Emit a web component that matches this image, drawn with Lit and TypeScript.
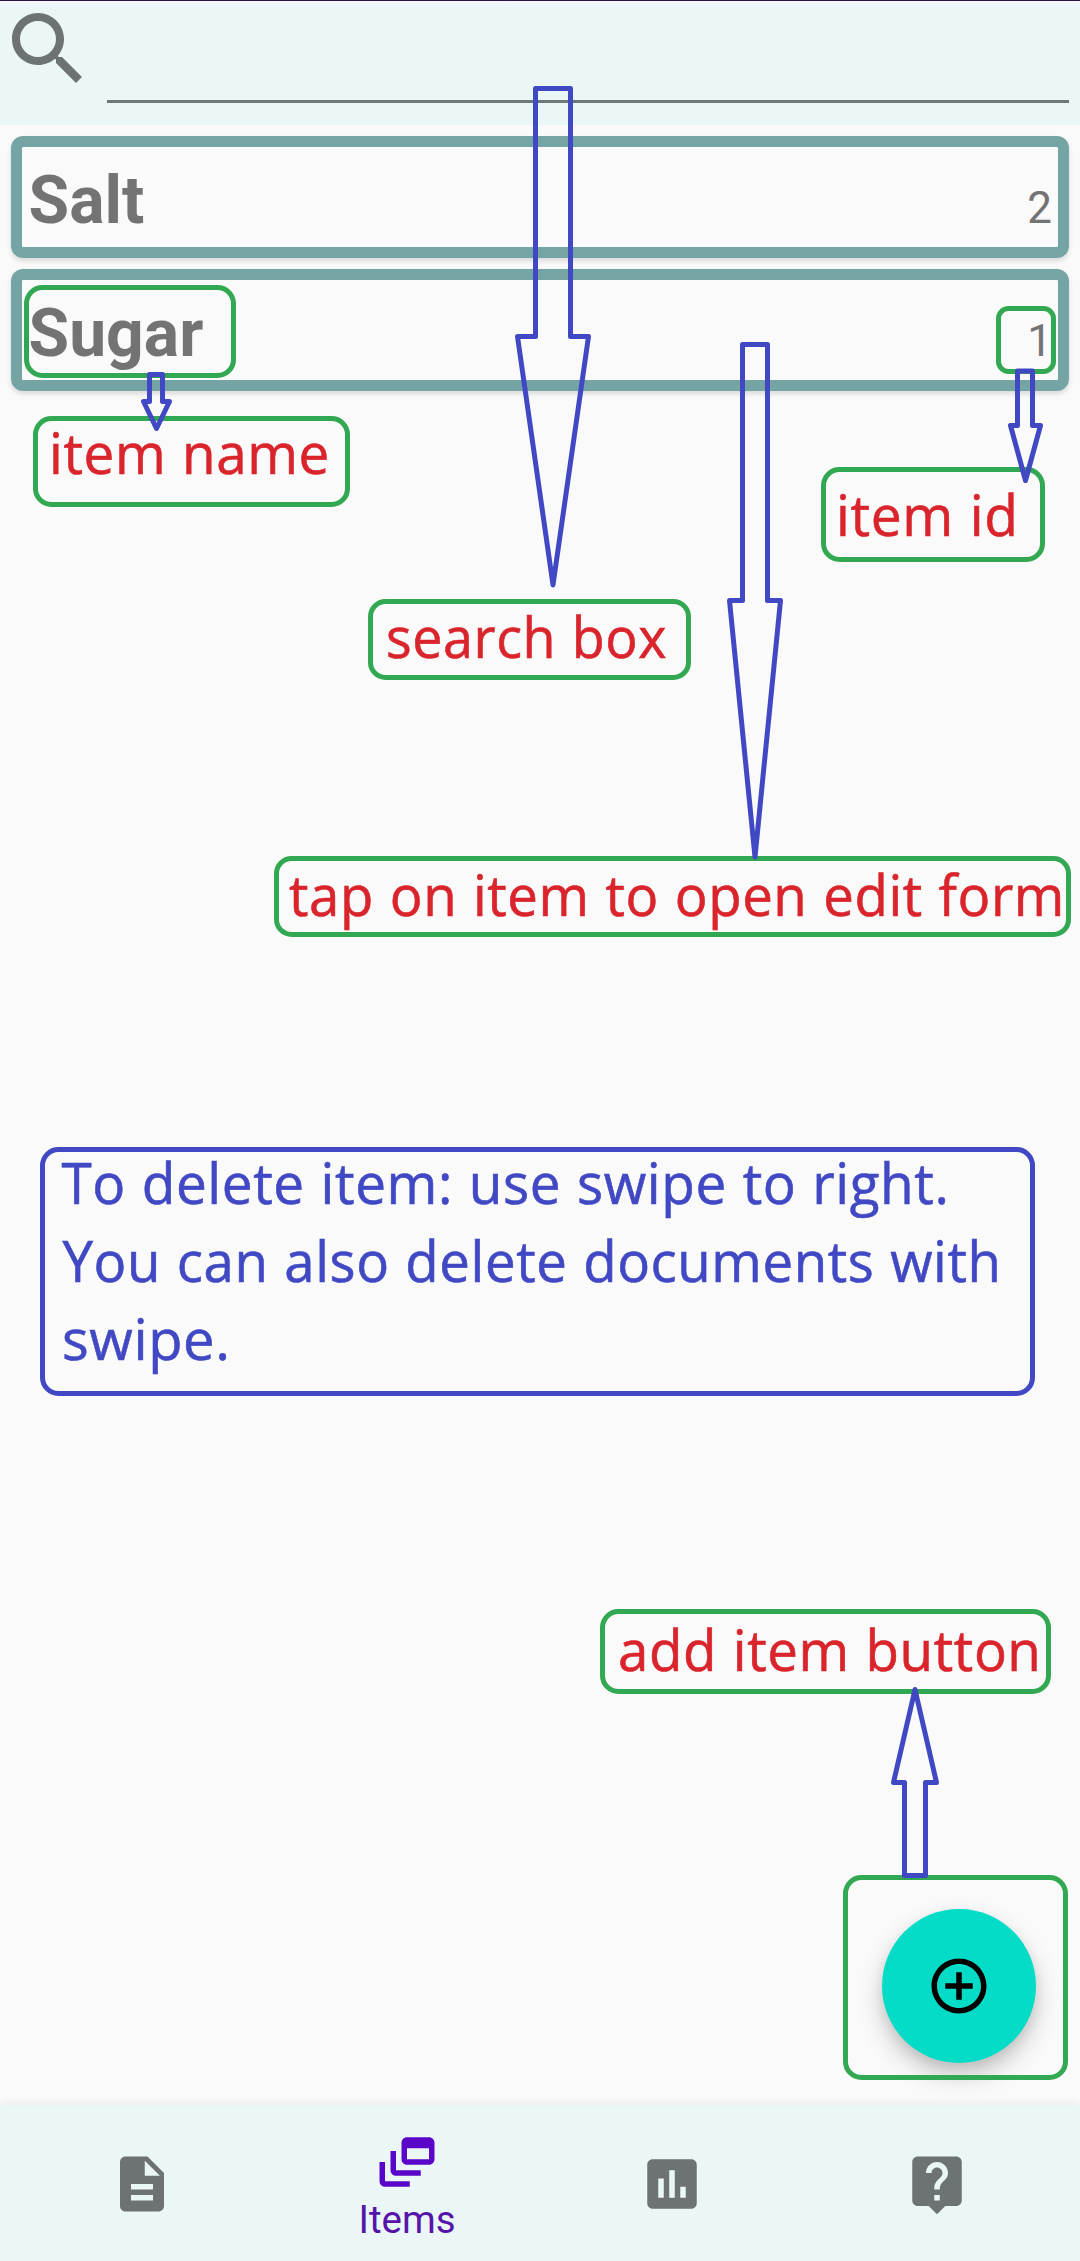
import { LitElement, html, svg, css } from "lit";
import { customElement, property } from "lit/decorators.js";

interface Item {
  name: string;
  id: number;
}

interface NavEntry {
  label: string;
  paths: string[];
  active?: boolean;
}

interface Box {
  x: number;
  y: number;
  w: number;
  h: number;
  r: number;
  tone: "green" | "blue";
}

interface Note {
  text: string;
  x: number;
  y: number;
  w: number;
  tone: "red" | "blue";
}

const ITEMS: Item[] = [
  { name: "Salt", id: 2 },
  { name: "Sugar", id: 1 },
];

const NAV: NavEntry[] = [
  {
    label: "",
    paths: [
      "M14 2H6c-1.1 0-1.99.9-1.99 2L4 20c0 1.1.89 2 1.99 2H18c1.1 0 2-.9 2-2V8l-6-6zm2 16H8v-2h8v2zm0-4H8v-2h8v2zm-3-5V3.5L18.5 9H13z",
    ],
  },
  {
    label: "Items",
    active: true,
    paths: [
      "M8 8H6v7c0 1.1.9 2 2 2h9v-2H8V8z",
      "M20 3h-8c-1.1 0-2 .9-2 2v6c0 1.1.9 2 2 2h8c1.1 0 2-.9 2-2V5c0-1.1-.9-2-2-2zm0 8h-8V7h8v4z",
      "M4 12H2v7c0 1.1.9 2 2 2h9v-2H4v-7z",
    ],
  },
  {
    label: "",
    paths: [
      "M19 3H5c-1.1 0-2 .9-2 2v14c0 1.1.9 2 2 2h14c1.1 0 2-.9 2-2V5c0-1.1-.9-2-2-2zM9 17H7v-7h2v7zm4 0h-2V7h2v10zm4 0h-2v-4h2v4z",
    ],
  },
  {
    label: "",
    paths: [
      "M19 2H5c-1.11 0-2 .9-2 2v14c0 1.1.89 2 2 2h4l3 3 3-3h4c1.1 0 2-.9 2-2V4c0-1.1-.9-2-2-2zm-6 16h-2v-2h2v2zm2.07-7.75l-.9.92C13.45 11.9 13 12.5 13 14h-2v-.5c0-1.1.45-2.1 1.17-2.83l1.24-1.26c.37-.36.59-.86.59-1.41 0-1.1-.9-2-2-2s-2 .9-2 2H8c0-2.21 1.79-4 4-4s4 1.79 4 4c0 .88-.36 1.68-.93 2.25z",
    ],
  },
];

const BOXES: Box[] = [
  { x: 24, y: 285, w: 212, h: 93, r: 16, tone: "green" },
  { x: 996, y: 306, w: 60, h: 68, r: 10, tone: "green" },
  { x: 33, y: 416, w: 317, h: 91, r: 16, tone: "green" },
  { x: 821, y: 467, w: 224, h: 95, r: 16, tone: "green" },
  { x: 368, y: 599, w: 323, h: 81, r: 15, tone: "green" },
  { x: 274, y: 856, w: 797, h: 81, r: 15, tone: "green" },
  { x: 40, y: 1147, w: 995, h: 249, r: 16, tone: "blue" },
  { x: 600, y: 1609, w: 451, h: 85, r: 16, tone: "green" },
  { x: 843, y: 1875, w: 225, h: 205, r: 16, tone: "green" },
];

const ARROWS: string[] = [
  "M535.5 88.5H570.5V336.5H588.5L553 585L517.5 336.5H535.5Z",
  "M742.5 344.5H767.5V600.5H780.5L755 857L729.5 600.5H742.5Z",
  "M149.5 374.5H162.5V401.5H169.5L156.5 428.5L143.5 401.5H149.5Z",
  "M1017.5 371H1032.5V425.5H1040.5L1025.5 480.5L1010.5 425.5H1017.5Z",
  "M904.5 1875.5H925.5V1782.5H936.5L915 1689.5L893.5 1782.5H904.5Z",
];

const NOTES: Note[] = [
  { text: "item name", x: 49, y: 474, w: 281, tone: "red" },
  { text: "item id", x: 836, y: 536, w: 182.5, tone: "red" },
  { text: "search box", x: 386, y: 658, w: 281, tone: "red" },
  { text: "tap on item to open edit form", x: 289, y: 916, w: 776, tone: "red" },
  { text: "To delete item: use swipe to right.", x: 61.5, y: 1204, w: 888, tone: "blue" },
  { text: "You can also delete documents with", x: 62.5, y: 1282, w: 939, tone: "blue" },
  { text: "swipe.", x: 62, y: 1360, w: 168.5, tone: "blue" },
  { text: "add item button", x: 618, y: 1671, w: 423.5, tone: "red" },
];

@customElement("search-bar")
export class SearchBar extends LitElement {
  static styles = css`
    :host {
      display: flex;
      flex: none;
      box-sizing: border-box;
      height: 125px;
      padding-right: 11px;
      gap: 11px;
      border-top: 1px solid #2d1247;
      background: linear-gradient(#f1f6fb 0, #ebf7f7 6px);
    }
    .icon {
      flex: none;
      width: 96px;
      height: 96px;
      fill: #6d7373;
    }
    .field {
      flex: 1;
      box-sizing: border-box;
      height: 102px;
      border-bottom: 3px solid #6d7878;
    }
  `;

  render() {
    return html`
      <svg class="icon" viewBox="0 0 24 24">
        <path
          d="M15.5 14h-.79l-.28-.27C15.41 12.59 16 11.11 16 9.5 16 5.91 13.09 3 9.5 3S3 5.91 3 9.5 5.91 16 9.5 16c1.61 0 3.09-.59 4.23-1.57l.27.28v.79l5 4.99L20.49 19l-4.99-5zm-6 0C7.01 14 5 11.99 5 9.5S7.01 5 9.5 5 14 7.01 14 9.5 11.99 14 9.5 14z"
        />
      </svg>
      <div class="field"></div>
    `;
  }
}

@customElement("item-card")
export class ItemCard extends LitElement {
  @property({ attribute: false }) item!: Item;

  static styles = css`
    :host {
      display: flex;
      justify-content: space-between;
      align-items: baseline;
      box-sizing: border-box;
      height: 122px;
      padding: 15px 6px 0 6.5px;
      border: 11px solid #74a5a4;
      border-radius: 12px;
      box-shadow: 0 3px 5px rgba(0, 0, 0, 0.13);
      color: #737373;
    }
    .name {
      font-size: 66px;
      font-weight: 700;
      line-height: 78px;
    }
    .id {
      font-size: 44px;
      line-height: 52px;
    }
  `;

  render() {
    return html`<span class="name">${this.item.name}</span><span class="id">${this.item.id}</span>`;
  }
}

@customElement("bottom-nav")
export class BottomNav extends LitElement {
  static styles = css`
    :host {
      display: grid;
      grid-template-columns: repeat(4, 265px);
      justify-content: center;
      flex: none;
      box-sizing: border-box;
      height: 156px;
      padding-right: 1px;
      background: #ebf7f7;
      box-shadow: 0 -3px 9px rgba(0, 0, 0, 0.06);
    }
    .tab {
      display: flex;
      flex-direction: column;
      align-items: center;
      padding-top: 46px;
      color: #6d7373;
    }
    .tab.active {
      padding-top: 24px;
    }
    .icon {
      width: 66px;
      height: 66px;
      fill: currentColor;
    }
    .active .icon {
      fill: #5a06c8;
    }
    .label {
      margin-top: 2px;
      font-size: 38.5px;
      line-height: 45px;
      color: #5615a8;
    }
  `;

  render() {
    return html`${NAV.map(
      (n) => html`
        <div class="tab ${n.active ? "active" : ""}">
          <svg class="icon" viewBox="0 0 24 24">${n.paths.map((d) => svg`<path d=${d} />`)}</svg>
          ${n.label ? html`<span class="label">${n.label}</span>` : null}
        </div>
      `
    )}`;
  }
}

/** Explanatory boxes, arrows and captions laid over the screen. */
@customElement("guide-overlay")
export class GuideOverlay extends LitElement {
  static styles = css`
    :host {
      position: absolute;
      inset: 0;
      pointer-events: none;
    }
    .canvas {
      display: block;
      width: 1080px;
      height: 2261px;
    }
    .shape {
      fill: none;
      stroke-width: 5;
      stroke-linejoin: round;
    }
    .shape.green {
      stroke: #32a852;
    }
    .shape.blue {
      stroke: #4048c4;
    }
    .note {
      font-family: "Open Sans", "Noto Sans", sans-serif;
      font-size: 56px;
      letter-spacing: 0.6px;
      word-spacing: 1px;
      stroke-width: 0.6;
    }
    .note.red {
      fill: #da242c;
      stroke: #da242c;
    }
    .note.blue {
      fill: #4048c4;
      stroke: #4048c4;
    }
  `;

  render() {
    return html`
      <svg class="canvas" viewBox="0 0 1080 2261">
        ${BOXES.map(
          (b) => svg`<rect class="shape ${b.tone}" x=${b.x + 2.5} y=${b.y + 2.5}
            width=${b.w - 5} height=${b.h - 5} rx=${b.r} />`
        )}
        ${ARROWS.map((d) => svg`<path class="shape blue" d=${d} />`)}
        ${NOTES.map(
          (n) => svg`<text class="note ${n.tone}" x=${n.x} y=${n.y} textLength=${n.w}
            lengthAdjust="spacingAndGlyphs">${n.text}</text>`
        )}
      </svg>
    `;
  }
}

@customElement("app-root")
export class AppRoot extends LitElement {
  static styles = css`
    :host {
      position: relative;
      display: flex;
      flex-direction: column;
      width: 1080px;
      height: 2261px;
      overflow: hidden;
      background: #fafafa;
      font-family: Roboto, sans-serif;
    }
    .content {
      display: flex;
      flex: 1;
      flex-direction: column;
      justify-content: space-between;
      padding: 11px 11px 42px;
    }
    .list {
      display: flex;
      flex-direction: column;
      gap: 11px;
    }
    .fab {
      display: flex;
      align-items: center;
      justify-content: center;
      align-self: flex-end;
      width: 154px;
      height: 154px;
      margin-right: 33px;
      padding: 0;
      border: none;
      border-radius: 50%;
      background: #04dcc8;
      box-shadow: 0 12px 26px rgba(0, 0, 0, 0.2), 0 6px 12px rgba(0, 0, 0, 0.08);
    }
    .plus {
      width: 66px;
      height: 66px;
      fill: #000;
    }
  `;

  render() {
    return html`
      <search-bar></search-bar>
      <main class="content">
        <div class="list">${ITEMS.map((i) => html`<item-card .item=${i}></item-card>`)}</div>
        <button class="fab">
          <svg class="plus" viewBox="0 0 24 24">
            <path
              d="M13 7h-2v4H7v2h4v4h2v-4h4v-2h-4V7zm-1-5C6.48 2 2 6.48 2 12s4.48 10 10 10 10-4.48 10-10S17.52 2 12 2zm0 18c-4.41 0-8-3.59-8-8s3.59-8 8-8 8 3.59 8 8-3.59 8-8 8z"
            />
          </svg>
        </button>
      </main>
      <bottom-nav></bottom-nav>
      <guide-overlay></guide-overlay>
    `;
  }
}
